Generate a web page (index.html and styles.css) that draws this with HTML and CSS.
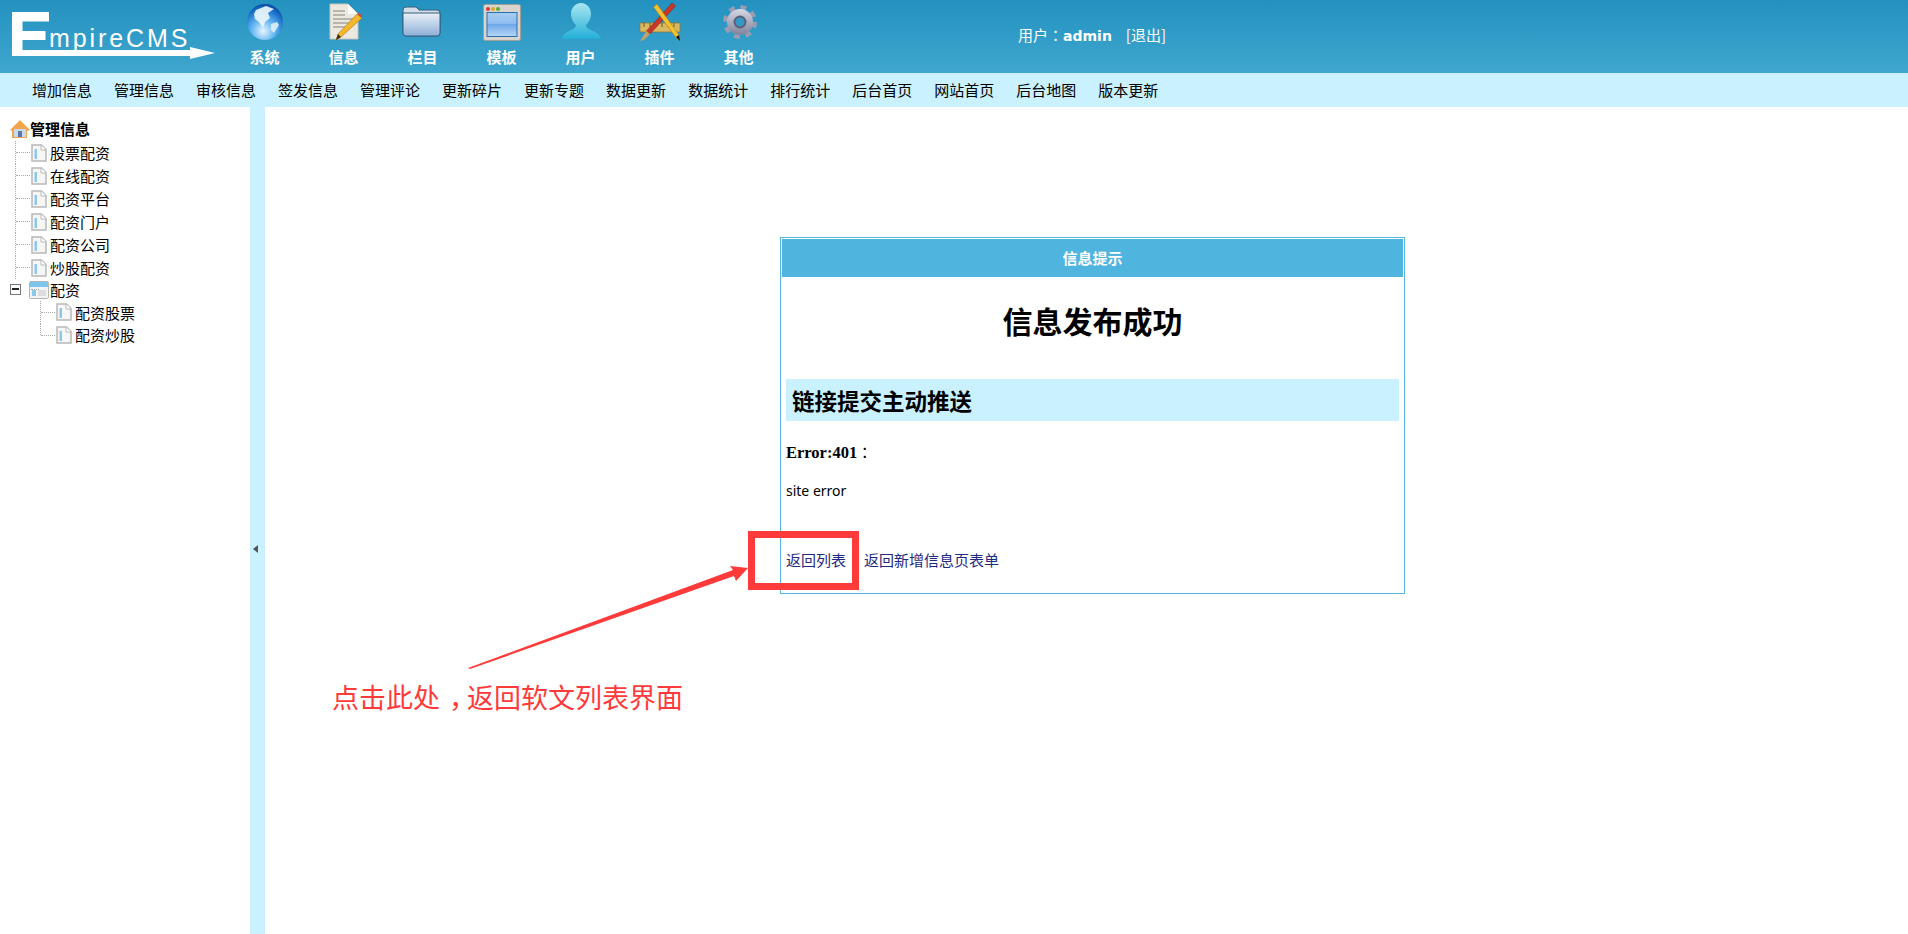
FILE: index.html
```html
<!DOCTYPE html>
<html lang="zh">
<head>
<meta charset="utf-8">
<title>EmpireCMS</title>
<link rel="stylesheet" href="styles.css">
</head>
<body>
<header class="top">
  <svg class="logo" width="216" height="60" viewBox="0 0 216 60">
    <path d="M12 12h37v9.500H22.500v9.500h23v9H22.500v10H190v-3l25 6-25 6v-3H12z" fill="#fff"/>
    <text x="49" y="47" class="logo-text">mpireCMS</text>
  </svg>
  <nav class="apps">
    <a class="app"><svg class="app-ic" viewBox="0 0 48 48"><defs><radialGradient id="g1" cx=".45" cy=".75" r=".75"><stop offset="0" stop-color="#e8f7ff"/><stop offset=".45" stop-color="#5db2f0"/><stop offset=".85" stop-color="#1268c4"/><stop offset="1" stop-color="#0a4a9c"/></radialGradient></defs><circle cx="24" cy="22" r="18" fill="url(#g1)"/><path d="M15 10l10-4 8 3-6 4 2 5-5 4-2 6-4-6-4-3-1-5z" fill="#eaf6fc" opacity=".92"/><path d="M30 24l6-2 2 3-5 8-3-3z" fill="#e4f3fb" opacity=".85"/></svg><span>系统</span></a>
    <a class="app"><svg class="app-ic" viewBox="0 0 48 48"><path d="M10 4h18l10 10v25H10z" fill="#ebe8e0" stroke="#c4c4bc"/><path d="M28 4v10h10z" fill="#fbfbf8"/><path d="M13 11h12M13 15h12M13 19h20M13 23h17M13 27h12" stroke="#a8a59a" stroke-width="1.500"/><path d="M37 14l5 4-21 19-5 3 2-6z" fill="#f4b72a" stroke="#a9781a" stroke-width=".6"/><path d="M37 14l2-1 3 2v3l-5-4z" fill="#c94a3a"/><path d="M16 40l2-6 3 3z" fill="#3b2b1a"/></svg><span>信息</span></a>
    <a class="app"><svg class="app-ic" viewBox="0 0 48 48"><defs><linearGradient id="g3" x1="0" y1="0" x2="0" y2="1"><stop offset="0" stop-color="#e9eff7"/><stop offset=".5" stop-color="#bcd0e8"/><stop offset="1" stop-color="#8eaed6"/></linearGradient></defs><path d="M4 10q0-3 3-3h10l3 3h18q3 0 3 3v20q0 3-3 3H7q-3 0-3-3z" fill="#d5dde8" stroke="#33607f"/><path d="M4 13h37v20q0 3-3 3H7q-3 0-3-3z" fill="url(#g3)" stroke="#33607f"/></svg><span>栏目</span></a>
    <a class="app"><svg class="app-ic" viewBox="0 0 48 48"><defs><linearGradient id="g4" x1="0" y1="0" x2="0" y2="1"><stop offset="0" stop-color="#a8cdf2"/><stop offset=".45" stop-color="#8fbef0"/><stop offset=".5" stop-color="#6ea8ea"/><stop offset="1" stop-color="#b6d6f4"/></linearGradient></defs><rect x="5.500" y="4.500" width="37" height="36" rx="2" fill="#d8d5ce" stroke="#a0a09a"/><circle cx="10" cy="9" r="2" fill="#d83a2f"/><circle cx="15" cy="9" r="2" fill="#e7a325"/><circle cx="20" cy="9" r="2" fill="#5fae2e"/><rect x="9" y="12.500" width="30" height="24" fill="url(#g4)" stroke="#2a6fb0"/></svg><span>模板</span></a>
    <a class="app"><svg class="app-ic" viewBox="0 0 48 48"><defs><linearGradient id="g5" x1="0" y1="0" x2="0" y2="1"><stop offset="0" stop-color="#a8e6ef"/><stop offset="1" stop-color="#23afd8"/></linearGradient></defs><path d="M24 3c6 0 10 5 10 11 0 5-3 9-5 11 0 3 3 4 7 6 4 2 8 5 8 8H5c0-3 3-6 7-8 4-2 7-3 7-6-2-2-5-6-5-11 0-6 4-11 10-11z" fill="url(#g5)"/></svg><span>用户</span></a>
    <a class="app"><svg class="app-ic" viewBox="0 0 48 48"><path d="M4 23h40v9H4z" fill="#d9b862" stroke="#8c7434" stroke-width=".7"/><path d="M8 23v4M14 23v4M20 23v4M26 23v4M32 23v4M38 23v4" stroke="#6b5620"/><path d="M36 3l3.500 3L14 34l-3.500-3z" fill="#c8372a" stroke="#7a1d15" stroke-width=".5"/><path d="M10.500 31L14 34l-6 6-4 1z" fill="#c2a06a"/><path d="M21 4l-3.500 3 22 30 4.500 4-1-6z" fill="#f4c22e" stroke="#99701a" stroke-width=".5"/><path d="M40 37l4 4-1-6z" fill="#111"/></svg><span>插件</span></a>
    <a class="app"><svg class="app-ic" viewBox="0 0 48 48"><defs><linearGradient id="g7" x1="0" y1="0" x2="0" y2="1"><stop offset="0" stop-color="#d6d8e4"/><stop offset="1" stop-color="#7f829c"/></linearGradient></defs><circle cx="25" cy="22" r="14.500" fill="none" stroke="#9a9cb2" stroke-width="5" stroke-dasharray="5.700 5.700"/><circle cx="25" cy="22" r="13" fill="url(#g7)"/><circle cx="25" cy="22" r="5.500" fill="#3298c4" stroke="#5c5f78" stroke-width="2"/></svg><span>其他</span></a>
  </nav>
  <div class="user">用户<span class="cjk-tc" lang="zh-TW">：</span><b>admin</b><span class="logout">[退出]</span></div>
</header>
<nav class="menu">
  <a>增加信息</a><a>管理信息</a><a>审核信息</a><a>签发信息</a><a>管理评论</a><a>更新碎片</a><a>更新专题</a><a>数据更新</a><a>数据统计</a><a>排行统计</a><a>后台首页</a><a>网站首页</a><a>后台地图</a><a>版本更新</a>
</nav>
<div class="body">
  <aside class="side">
    <svg width="0" height="0" class="defs">
      <symbol id="page" viewBox="0 0 16 18"><path d="M1 1h9.500L15 5.500V17H1z" fill="#f6f6f6" stroke="#b8b8b8" stroke-width="1.500"/><path d="M10 1v5h5" fill="#fff" stroke="#b8b8b8"/><rect x="3.500" y="5" width="2.500" height="10" fill="#8cc8ee"/></symbol>
    </svg>
    <div class="root"><svg class="home" viewBox="0 0 20 20"><path d="M10 1L0 11l2 1v7h15v-7l3-1z" fill="#f3a54a"/><rect x="4" y="10" width="12" height="8" fill="#c9d8ec"/><rect x="8" y="12" width="4" height="6" fill="#5b76a8"/></svg><b>管理信息</b></div>
    <ul class="tree">
      <li><svg class="pg"><use href="#page"/></svg>股票配资</li>
      <li><svg class="pg"><use href="#page"/></svg>在线配资</li>
      <li><svg class="pg"><use href="#page"/></svg>配资平台</li>
      <li><svg class="pg"><use href="#page"/></svg>配资门户</li>
      <li><svg class="pg"><use href="#page"/></svg>配资公司</li>
      <li><svg class="pg"><use href="#page"/></svg>炒股配资</li>
    </ul>
    <div class="folder"><span class="minus"></span><svg class="win" viewBox="0 0 20 18"><rect x=".5" y=".5" width="19" height="17" rx="1" fill="#f3f3f3" stroke="#b4b4b4"/><rect x="1" y="1" width="18" height="5" fill="#7cc6ee"/><rect x="3" y="9" width="4" height="6" fill="#8cc8ee"/><path d="M9 10h8M9 12h8M9 14h8" stroke="#c8c8c8"/></svg>配资</div>
    <ul class="tree sub">
      <li><svg class="pg"><use href="#page"/></svg>配资股票</li>
      <li><svg class="pg"><use href="#page"/></svg>配资炒股</li>
    </ul>
  </aside>
  <div class="split"><span class="tri"></span></div>
  <main class="main">
    <section class="box">
      <h3 class="box-title">信息提示</h3>
      <div class="box-body">
        <h1>信息发布成功</h1>
        <h2>链接提交主动推送</h2>
        <p class="err"><b>Error:401</b><span class="cjk-tc" lang="zh-TW">：</span></p>
        <p class="site">site error</p>
        <p class="links"><a>返回列表</a><a>返回新增信息页表单</a></p>
      </div>
    </section>
  </main>
</div>
<div class="mark"></div>
<svg class="arrow" width="300" height="125" viewBox="0 0 300 125"><path d="M8 118L273 20l-3-4 18 2-12 13-2-5L10 119z" fill="#ff3a3a"/></svg>
<div class="note">点击此处<span class="comma">，</span>返回软文列表界面</div>
</body>
</html>
```

FILE: styles.css
```css
* { box-sizing: border-box; }
html, body { margin: 0; height: 100%; }
body {
  display: flex; flex-direction: column; height: 934px; overflow: hidden;
  font: 15px/1.3 "Noto Sans CJK SC", "Noto Sans", sans-serif; color: #000; background: #fff;
}
ul { list-style: none; margin: 0; padding: 0; }
.cjk-tc { font-family: "Noto Sans CJK TC", sans-serif; }

.top {
  flex: none; height: 73px; display: flex; color: #fff;
  background: linear-gradient(#2391bf, #3fa7cf);
}
.logo { flex: none; display: block; }
.logo-text { font: 25px "Liberation Sans", sans-serif; letter-spacing: 2.900px; fill: #fff; }
.apps { display: flex; margin-left: 9px; }
.app { width: 79px; display: flex; flex-direction: column; align-items: center; font-weight: 700; line-height: 20px; }
.app-ic { width: 48px; height: 48px; display: block; margin-bottom: -1px; flex: none; }
.user { margin-left: 240px; padding-top: 25px; font-size: 15px; line-height: 20px; }
.user b { font-family: "DejaVu Sans", sans-serif; font-size: 14px; }
.logout { margin-left: 14px; }

.menu { flex: none; height: 34px; display: flex; gap: 22px; padding-left: 32px; background: #c9f1ff; align-items: center; line-height: 20px; }

.body { flex: 1; display: flex; min-height: 0; }
.side { flex: none; width: 250px; padding: 10px 0 0 10px; }
.defs { position: absolute; }
.root { height: 23px; margin-bottom: 1px; display: flex; align-items: center; }
.root b { font-weight: 700; }
.home { width: 20px; height: 20px; }
.tree { margin-left: 5px; }
.tree li { height: 23px; display: flex; align-items: center; padding-left: 16px; position: relative; white-space: nowrap; }
.tree li::before { content: ""; position: absolute; left: 1px; top: 11px; width: 14px; border-top: 1px dotted #aaa; }
.tree li::after { content: ""; position: absolute; left: 0; top: 0; bottom: 0; border-left: 1px dotted #aaa; }
.sub li:last-child::after { bottom: 11px; }
.pg { width: 16px; height: 18px; margin-right: 3px; flex: none; }
.folder { height: 23px; margin-top: -1px; display: flex; align-items: center; white-space: nowrap; position: relative; }
.folder::before { content: ""; position: absolute; left: 21px; top: 11px; width: 8px; border-top: 1px dotted #aaa; }
.minus { width: 11px; height: 11px; border: 1px solid #777; margin-right: 8px; position: relative; flex: none; }
.minus::before { content: ""; position: absolute; left: 1px; right: 1px; top: 3px; height: 2px; background: #222; }
.win { width: 20px; height: 18px; margin-right: 1px; flex: none; }
.sub { margin-left: 30px; }
.sub li { height: 22.500px; }

.split { flex: none; width: 15px; background: #c9f1ff; display: flex; align-items: center; justify-content: center; padding: 56px 4px 0 0; }
.tri { width: 0; height: 0; border: 4.500px solid transparent; border-right: 5px solid #555; border-left: 0; }

.main { flex: 1; padding: 130px 0 0 515px; }
.box { width: 625px; height: 357px; border: 1px solid #56b8e2; padding: 1px; }
.box-title { margin: 0; height: 38px; line-height: 38px; text-align: center; background: #4fb4de; color: #fff; font-size: 15px; font-weight: 700; }
.box-body { padding: 0 4px; }
h1 { margin: 0; padding-top: 21px; height: 102px; font-size: 30px; line-height: 44px; font-weight: 700; text-align: center; }
h2 { margin: 0; height: 42px; line-height: 43px; padding-left: 6px; font-size: 22.500px; font-weight: 700; background: #c9f1ff; }
.err { margin: 21px 0 0; line-height: 20px; }
.err b { font: 700 16.500px/20px "Liberation Serif", serif; }
.site { margin: 18px 0 0; font: 14px/20px "Noto Sans", sans-serif; }
.links { margin: 49px 0 0; line-height: 20px; color: #1e2a80; display: flex; gap: 18px; font-size: 15px; }

.mark { position: absolute; left: 748px; top: 531px; width: 111px; height: 59px; border: 7px solid #ff3a3a; }
.arrow { position: absolute; left: 460px; top: 550px; }
.note { position: absolute; left: 332px; top: 678px; font-size: 27px; line-height: 38px; color: #ff3a3a; white-space: nowrap; }
.comma { padding-left: 9px; letter-spacing: -9px; }
```
